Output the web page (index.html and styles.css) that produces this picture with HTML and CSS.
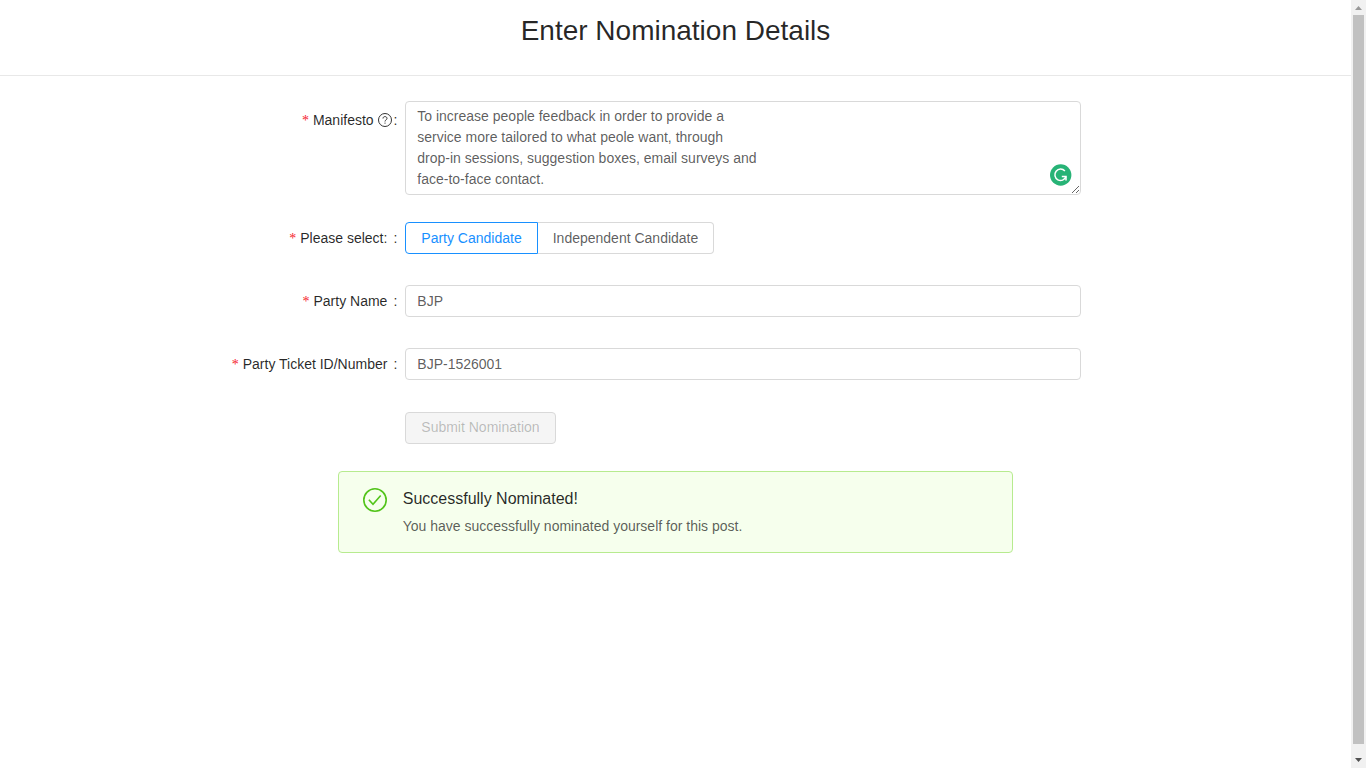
FILE: index.html
```html
<!DOCTYPE html>
<html lang="en">
<head>
  <meta charset="utf-8">
  <title>Enter Nomination Details</title>
  <link rel="stylesheet" href="styles.css">
</head>
<body>
  <div class="viewport">
    <main class="page">
      <header class="page-header">
        <h1 class="page-title">Enter Nomination Details</h1>
      </header>

      <form class="form">
        <div class="row row-text">
          <label class="label label-icon" for="manifesto">Manifesto
            <svg class="help" viewBox="0 0 14 14" aria-hidden="true"><circle cx="7" cy="7" r="6.5"/><path d="M5 5.5C5 4.3 5.8 3.6 7 3.6s2 .8 2 1.8c0 1.5-2 1.5-2 3.1"/><path d="M7 9.6v1.1"/></svg>
          </label>
          <div class="field textarea-wrap">
            <textarea class="control textarea" id="manifesto" rows="4" spellcheck="false">To increase people feedback in order to provide a
service more tailored to what peole want, through
drop-in sessions, suggestion boxes, email surveys and
face-to-face contact.</textarea>
            <svg class="badge" viewBox="0 0 22 22" aria-hidden="true"><circle cx="10.700" cy="11" r="10.700" fill="#27b376"/><path d="M14.900 7.100A5.700 5.700 0 1 0 16 12.600" fill="none" stroke="#fff" stroke-width="1.500"/><path d="M11.800 12.500h4.200v4" fill="none" stroke="#fff" stroke-width="1.500"/></svg>
          </div>
        </div>

        <div class="row">
          <span class="label" id="type-label">Please select:</span>
          <div class="field radio-group" role="radiogroup" aria-labelledby="type-label">
            <label class="radio"><input class="radio-input" type="radio" name="type" checked>Party Candidate</label>
            <label class="radio"><input class="radio-input" type="radio" name="type">Independent Candidate</label>
          </div>
        </div>

        <div class="row">
          <label class="label" for="party">Party Name</label>
          <div class="field"><input class="control" id="party" type="text" value="BJP"></div>
        </div>

        <div class="row row-last">
          <label class="label" for="ticket">Party Ticket ID/Number</label>
          <div class="field"><input class="control" id="ticket" type="text" value="BJP-1526001"></div>
        </div>

        <div class="actions">
          <button class="submit" type="submit" disabled>Submit Nomination</button>
        </div>
      </form>

      <section class="alert" role="status">
        <svg class="alert-icon" viewBox="0 0 24 24" aria-hidden="true"><circle cx="12" cy="12" r="11.200"/><path d="M5.900 11.700l4.100 4.600 7.700-8.900"/></svg>
        <div>
          <h2 class="alert-title">Successfully Nominated!</h2>
          <p class="alert-text">You have successfully nominated yourself for this post.</p>
        </div>
      </section>
    </main>

    <div class="scrollbar" aria-hidden="true">
      <svg class="arrow" viewBox="0 0 15 15"><path d="M4 10h7L7.500 6z" fill="#989898"/></svg>
      <div class="thumb"></div>
      <svg class="arrow arrow-down" viewBox="0 0 15 15"><path d="M4 5h7L7.500 9z" fill="#505050"/></svg>
    </div>
  </div>
</body>
</html>
```

FILE: styles.css
```css
* {
  box-sizing: border-box;
}

body {
  margin: 0;
  background: #fff;
  color: rgba(0, 0, 0, 0.65);
  font: 14px/21px "Liberation Sans", Arial, sans-serif;
}

.viewport {
  display: flex;
  height: 100vh;
}

.page {
  flex: 1;
  min-width: 0;
  overflow: hidden;
}

.page-header {
  padding: 13px 16px 26px;
  border-bottom: 1px solid #e8e8e8;
  text-align: center;
}

.page-title {
  margin: 0;
  color: rgba(0, 0, 0, 0.85);
  font-size: 28px;
  font-weight: 400;
  line-height: 36px;
}

.form {
  padding-top: 25px;
}

.row {
  display: flex;
  margin-bottom: 31px;
}

.row-text {
  margin-bottom: 27px;
}

.row-last {
  margin-bottom: 32px;
}

.label {
  width: 30%;
  padding-right: 8px;
  color: rgba(0, 0, 0, 0.85);
  line-height: 32px;
  text-align: right;
}

.label::before {
  content: "*";
  margin-right: 4px;
  color: #f5222d;
  font-family: "Liberation Serif", serif;
  line-height: 1;
}

.label::after {
  content: ":";
  margin-left: 6px;
}

.label-icon {
  padding-top: 3px;
}

.label-icon::after {
  margin-left: 2px;
}

.help {
  width: 14px;
  height: 14px;
  margin-right: -4px;
  vertical-align: -2px;
  fill: none;
  stroke: #333;
  stroke-width: 1;
}

.field {
  width: 50%;
}

.control {
  display: block;
  width: 100%;
  height: 32px;
  margin: 0;
  padding: 4px 11px;
  border: 1px solid #d9d9d9;
  border-radius: 4px;
  outline: 0;
  background: #fff;
  color: inherit;
  font: inherit;
}

.textarea-wrap {
  position: relative;
}

.textarea {
  height: auto;
  overflow: auto;
  resize: vertical;
}

.badge {
  position: absolute;
  right: 9px;
  bottom: 9px;
  width: 22px;
  height: 22px;
}

.radio-group {
  display: flex;
}

.radio {
  position: relative;
  height: 32px;
  padding: 0 15px;
  border: 1px solid #d9d9d9;
  border-left-width: 0;
  border-radius: 0 4px 4px 0;
  line-height: 30px;
  cursor: pointer;
}

.radio:first-child {
  border-left-width: 1px;
  border-radius: 4px 0 0 4px;
}

.radio:has(:checked) {
  border-color: #1890ff;
  color: #1890ff;
}

.radio-input {
  position: absolute;
  width: 0;
  height: 0;
  margin: 0;
  opacity: 0;
}

.actions {
  padding-left: 30%;
}

.submit {
  display: block;
  height: 32px;
  padding: 0 15px 2px;
  border: 1px solid #d9d9d9;
  border-radius: 4px;
  background: #f5f5f5;
  color: rgba(0, 0, 0, 0.25);
  font: inherit;
}

.alert {
  display: flex;
  gap: 16px;
  width: 50%;
  margin: 27px auto 0;
  padding: 15px 24px;
  border: 1px solid #b7eb8f;
  border-radius: 4px;
  background: #f6ffed;
}

.alert-icon {
  flex: none;
  width: 24px;
  height: 24px;
  margin-top: 1px;
  fill: none;
  stroke: #52c41a;
  stroke-width: 1.6;
}

.alert-title {
  margin: 0 0 5px;
  color: rgba(0, 0, 0, 0.85);
  font-size: 16px;
  font-weight: 400;
  line-height: 24px;
}

.alert-text {
  margin: 0;
}

.scrollbar {
  display: flex;
  flex: none;
  flex-direction: column;
  width: 15px;
  background: #f1f1f1;
}

.arrow {
  flex: none;
  width: 15px;
  height: 15px;
}

.arrow-down {
  margin-top: 9px;
}

.thumb {
  flex: 1;
  margin: 0 2px;
  background: #c1c1c1;
}
```
